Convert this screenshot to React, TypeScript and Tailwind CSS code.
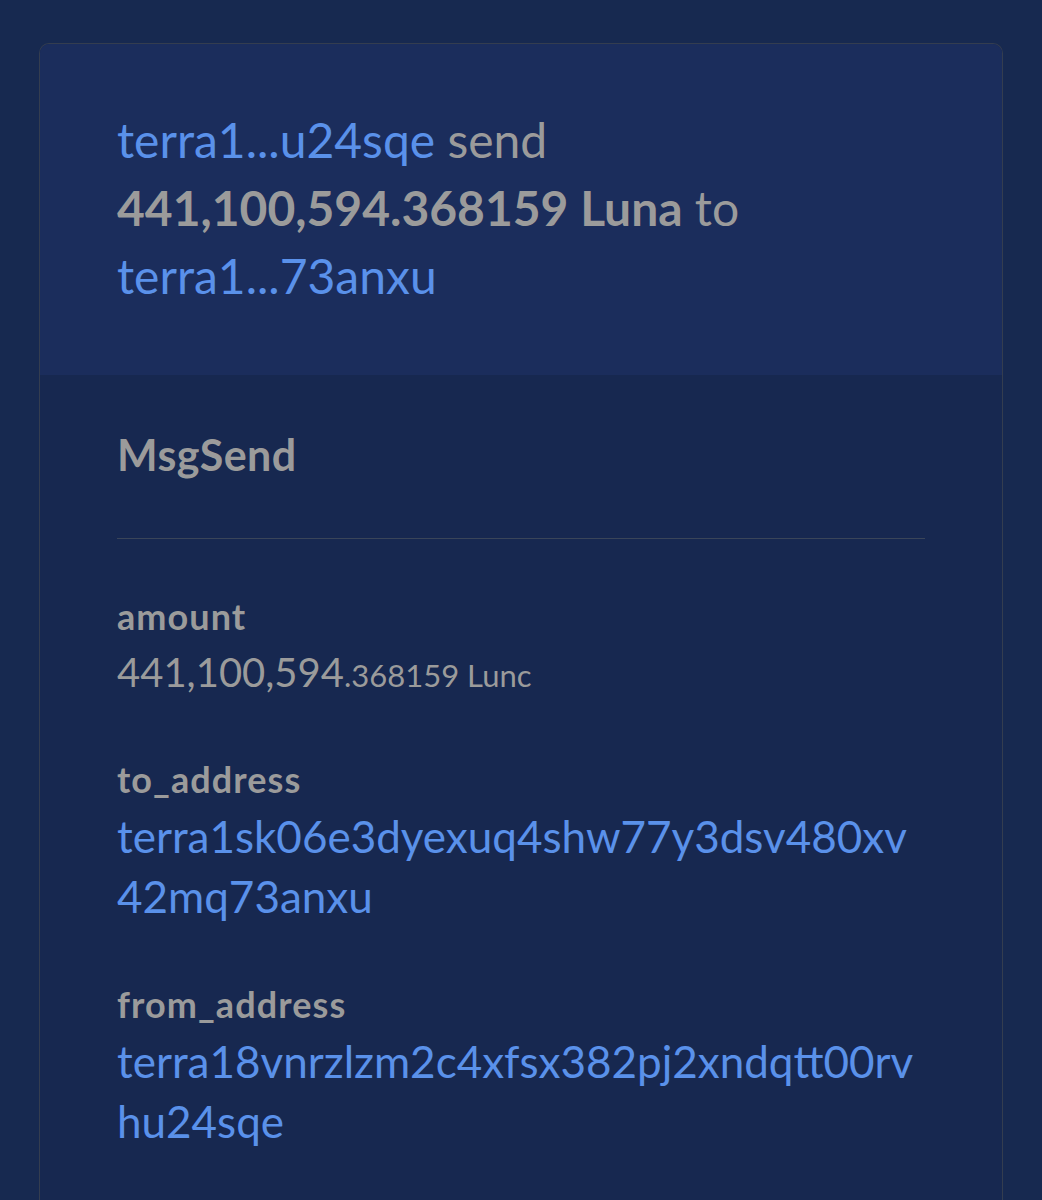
export default function App() {
  const font = { fontFamily: "Lato, 'Noto Sans', sans-serif" };
  return (
    <div className="min-h-[1200px] bg-[#172950] pt-[43px] px-[39px]" style={font}>
      <div className="rounded-t-[10px] border border-b-0 border-[#343d4f] overflow-hidden">
        <div className="bg-[#1b2d5c] px-[77px] pt-[62px] pb-[65px] text-[48px] leading-[68px] text-[#9b9b9b]">
          <span className="text-[#5a91ea]">terra1...u24sqe</span> send{" "}
          <span className="font-bold">441,100,594.368159 Luna</span> to{" "}
          <span className="text-[#5a91ea]">terra1...73anxu</span>
        </div>
        <div className="bg-[#172850] px-[77px] pt-[56px] pb-[60px] text-[#9b9b9b]">
          <div className="text-[43px] leading-[48px] font-bold tracking-[0.01em]">MsgSend</div>
          <div className="mt-[59px] h-px bg-[#3a4559]" />
          <div className="mt-[57px] text-[36px] leading-[40px] font-bold tracking-[0.03em]">amount</div>
          <div className="mt-[6px] leading-[60px]">
            <span className="text-[40px]">441,100,594</span>
            <span className="text-[31px]">.368159 Lunc</span>
          </div>
          <div className="mt-[48px] text-[36px] leading-[40px] font-bold tracking-[0.03em]">to_address</div>
          <div className="mt-[7px] text-[44px] leading-[60px] text-[#5a91ea] break-all">
            terra1sk06e3dyexuq4shw77y3dsv480xv42mq73anxu
          </div>
          <div className="mt-[58px] text-[36px] leading-[40px] font-bold tracking-[0.03em]">from_address</div>
          <div className="mt-[7px] text-[44px] leading-[60px] text-[#5a91ea] break-all">
            terra18vnrzlzm2c4xfsx382pj2xndqtt00rvhu24sqe
          </div>
        </div>
      </div>
    </div>
  );
}
